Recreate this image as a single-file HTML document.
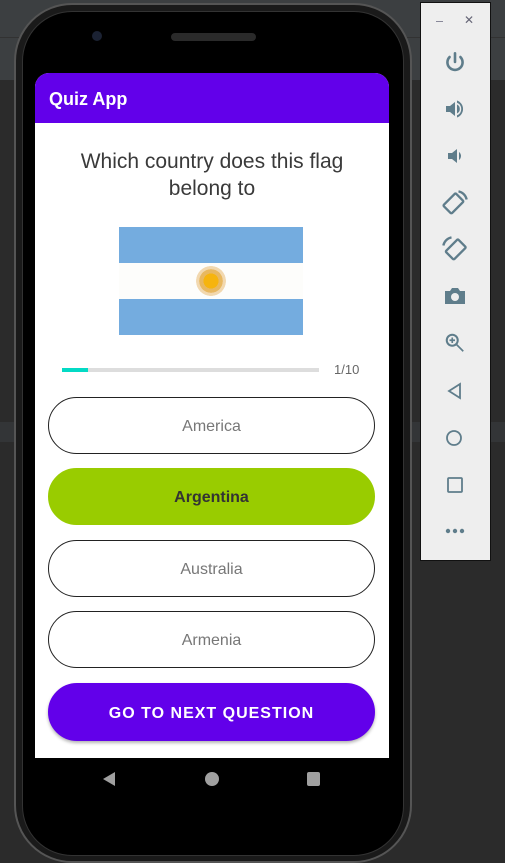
<!DOCTYPE html>
<html><head><meta charset="utf-8"><style>
*{margin:0;padding:0;box-sizing:border-box}
body{width:505px;height:861px;overflow:hidden;background:#2b2b2b;position:relative;font-family:"Liberation Sans",sans-serif}
.abs{position:absolute}
.btn{position:absolute;left:48px;width:327px;height:57px;border-radius:29px;border:1px solid #222;background:#fff;color:#777;font-size:16px;display:flex;align-items:center;justify-content:center;padding-top:3px}
</style></head><body>
<div class="abs" style="left:0;top:0;width:505px;height:37px;background:#3c3f41"></div>
<div class="abs" style="left:0;top:37px;width:505px;height:1px;background:#323232"></div>
<div class="abs" style="left:0;top:38px;width:505px;height:42px;background:#3c3f41"></div>
<div class="abs" style="left:0;top:422px;width:505px;height:20px;background:#333537"></div>
<div class="abs" style="left:14px;top:3px;width:398px;height:860px;border-radius:58px;background:#1a1a1a;border:2px solid #555"></div>
<div class="abs" style="left:22px;top:11px;width:382px;height:845px;border-radius:50px;background:#000;border:1px solid #333"></div>
<div class="abs" style="left:92px;top:31px;width:10px;height:10px;border-radius:50%;background:#1b2233"></div>
<div class="abs" style="left:171px;top:33px;width:85px;height:8px;border-radius:4px;background:#2a2a2a"></div>
<div class="abs" style="left:35px;top:73px;width:354px;height:685px;background:#fff;border-radius:14px 14px 0 0;overflow:hidden">
 <div style="height:50px;background:#6200ea;color:#fff;font-size:18px;font-weight:bold;padding:16px 0 0 14px">Quiz App</div>
</div>
<div class="abs" style="left:35px;top:148px;width:354px;text-align:center;font-size:21px;color:#3a3a3a;line-height:27px">Which country does this flag<br>belong to</div>
<div class="abs" style="left:119px;top:227px;width:184px;height:108px;background:#74acdf"></div>
<div class="abs" style="left:119px;top:263px;width:184px;height:36px;background:#fdfdfb"></div>
<div class="abs" style="left:196px;top:266px;width:30px;height:30px;border-radius:50%;background:radial-gradient(circle,#f6b40e 0 35%,#e8b860 36% 55%,rgba(230,180,100,.5) 56% 70%,transparent 71%)"></div>
<div class="abs" style="left:62px;top:368px;width:257px;height:4px;background:#ddd"></div>
<div class="abs" style="left:62px;top:368px;width:26px;height:4px;background:#03dac5"></div>
<div class="abs" style="left:334px;top:362px;font-size:13px;color:#666">1/10</div>
<div class="btn" style="top:397px">America</div>
<div class="btn" style="top:468px;background:#99cc00;border-color:#99cc00;color:#333;font-weight:bold">Argentina</div>
<div class="btn" style="top:540px">Australia</div>
<div class="btn" style="top:611px">Armenia</div>
<div class="btn" style="top:683px;height:58px;background:#6200ea;border-color:#6200ea;color:#fff;font-weight:bold;letter-spacing:1px;box-shadow:0 2px 3px rgba(0,0,0,.3)">GO TO NEXT QUESTION</div>
<svg class="abs" style="left:100px;top:770px" width="20" height="18"><polygon points="15,2 15,16 3,9" fill="#a0a0a0"/></svg>
<div class="abs" style="left:205px;top:772px;width:14px;height:14px;border-radius:50%;background:#a0a0a0"></div>
<div class="abs" style="left:307px;top:772px;width:13px;height:14px;border-radius:2px;background:#a0a0a0"></div>
<div class="abs" style="left:420px;top:2px;width:71px;height:559px;background:#eeeeee;border:1px solid #111"></div>
<div class="abs" style="left:436px;top:21px;width:7px;height:1px;background:#889"></div>
<div class="abs" style="left:464px;top:13px;font-size:12px;color:#667">✕</div>
<svg class="abs" style="left:442px;top:50px" width="26" height="26" viewBox="0 0 24 24" fill="none" stroke="#5f7d8b" stroke-width="2.4" stroke-linecap="round"><path d="M12 3v8"/><path d="M7 6.5a7 7 0 1 0 10 0"/></svg>
<svg class="abs" style="left:443px;top:97px" width="24" height="24" viewBox="0 0 24 24" fill="#5f7d8b"><path d="M3 9h4l5-4v14l-5-4H3z"/><path d="M14 7.5a5 5 0 0 1 0 9z"/><path d="M14 3.5a9 9 0 0 1 0 17v-2.2a6.8 6.8 0 0 0 0-12.6z"/></svg>
<svg class="abs" style="left:443px;top:144px" width="24" height="24" viewBox="0 0 24 24" fill="#5f7d8b"><path d="M5 9h4l5-4v14l-5-4H5z"/><path d="M16 8a5 5 0 0 1 0 8z"/></svg>
<svg class="abs" style="left:441px;top:189px" width="28" height="28" viewBox="0 0 24 24" fill="none" stroke="#5f7d8b" stroke-width="2"><rect x="6" y="5" width="10" height="15" rx="1" transform="rotate(45 11 12)"/><path d="M15 2a9 9 0 0 1 7 7"/></svg>
<svg class="abs" style="left:441px;top:235px" width="28" height="28" viewBox="0 0 24 24" fill="none" stroke="#5f7d8b" stroke-width="2"><rect x="8" y="5" width="10" height="15" rx="1" transform="rotate(45 13 12)"/><path d="M9 2a9 9 0 0 0 -7 7"/></svg>
<svg class="abs" style="left:443px;top:284px" width="24" height="24" viewBox="0 0 24 24"><path d="M2 7h5l2-3h6l2 3h5v13H2z" fill="#5f7d8b"/><circle cx="12" cy="13" r="4" fill="#eee"/></svg>
<svg class="abs" style="left:444px;top:332px" width="22" height="22" viewBox="0 0 24 24" fill="none" stroke="#5f7d8b" stroke-width="2.2"><circle cx="9" cy="9" r="6"/><path d="M13.5 13.5L21 21M9 6v6M6 9h6" stroke-width="1.8"/></svg>
<svg class="abs" style="left:445px;top:381px" width="20" height="20" viewBox="0 0 20 20" fill="none" stroke="#5f7d8b" stroke-width="1.8"><polygon points="15,3 15,17 4,10"/></svg>
<svg class="abs" style="left:444px;top:428px" width="20" height="20" viewBox="0 0 20 20" fill="none" stroke="#5f7d8b" stroke-width="1.8"><circle cx="10" cy="10" r="7"/></svg>
<svg class="abs" style="left:445px;top:475px" width="20" height="20" viewBox="0 0 20 20" fill="none" stroke="#5f7d8b" stroke-width="1.8"><rect x="3" y="3" width="14" height="14" rx="1"/></svg>
<svg class="abs" style="left:445px;top:527px" width="20" height="8" viewBox="0 0 20 8" fill="#5f7d8b"><circle cx="3" cy="4" r="2.2"/><circle cx="10" cy="4" r="2.2"/><circle cx="17" cy="4" r="2.2"/></svg>
</body></html>
